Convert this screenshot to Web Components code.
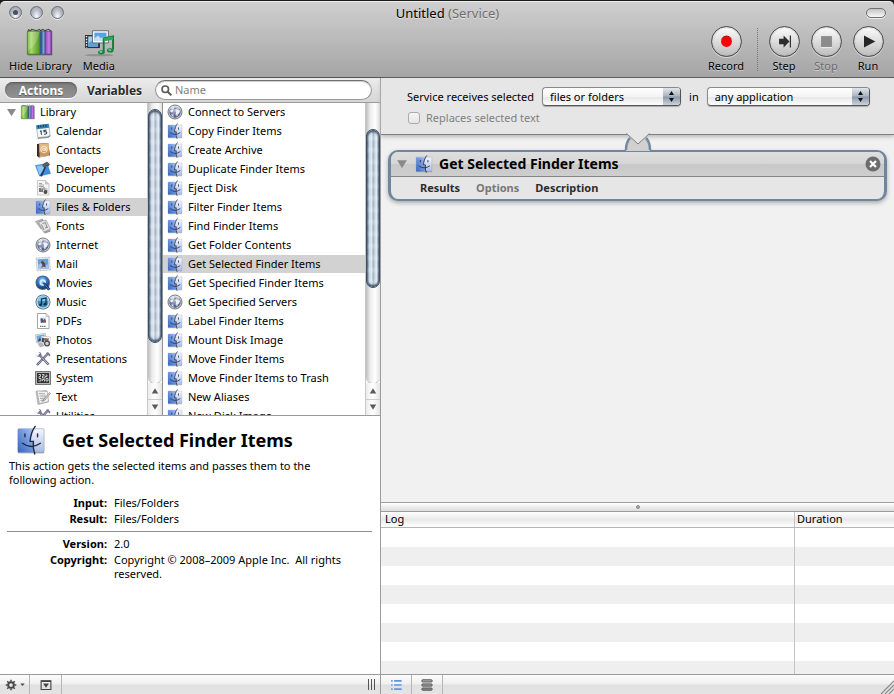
<!DOCTYPE html>
<html lang="en">
<head>
<meta charset="utf-8">
<title>Untitled (Service)</title>
<style>
  html, body { height: 100%; margin: 0; }
  body {
    background: #1c1a1c;
    color: #000;
    font: 11px/14px "Noto Sans", "Open Sans", sans-serif;
    overflow: hidden;
  }
</style>
</head>
<body>
<workflow-window></workflow-window>

<script>
const define = (tag, html, setup) => {
  const template = document.createElement('template');
  template.innerHTML = `<style>
    *, *::before, *::after { box-sizing: border-box; }
    button, input, select { font: inherit; color: inherit; }
    button { appearance: none; background: none; border: 0; margin: 0; padding: 0; text-align: inherit; }
  </style>${html}`;
  customElements.define(tag, class extends HTMLElement {
    constructor() {
      super();
      this.attachShadow({ mode: 'open' }).append(template.content.cloneNode(true));
    }
    connectedCallback() { if (setup) setup(this, this.shadowRoot); }
  });
};

const finder = `<defs><linearGradient id="a" x1="1" y1="0" x2="0" y2="1"><stop offset="0" stop-color="#a9c2ef"/><stop offset=".5" stop-color="#6c93dc"/><stop offset="1" stop-color="#3666bd"/></linearGradient>
  <linearGradient id="b" x1="0" y1="0" x2="0" y2="1"><stop offset="0" stop-color="#f4f7fc"/><stop offset="1" stop-color="#a9bbe4"/></linearGradient></defs>
  <path d="M2 29.500H30" stroke="#333" stroke-opacity=".45" stroke-width="1.500"/>
  <rect x="2" y="4" width="28" height="25" rx="1" fill="url(#b)" stroke="#8c99b3" stroke-width=".6"/>
  <path d="M3 4H19C17 9 15.500 13 15 18H18.500Q18 24 19 29H3Q2 29 2 28V5Q2 4 3 4Z" fill="url(#a)"/>
  <path d="M20.500 1.500C17 6 15.500 12 15 17.500H18.500C18 23 18.500 27 20 31M7 19.500Q16 26.500 26 19.500M9.500 9.500V12.500M23 9.500V12.500" fill="none" stroke="#1f2b45" stroke-width="1.500" stroke-linecap="round"/>`;

const books = `<defs><linearGradient id="g" x2="1"><stop offset="0" stop-color="#66a52d"/><stop offset=".3" stop-color="#a8d868"/><stop offset="1" stop-color="#4c9421"/></linearGradient><linearGradient id="p" x2="1"><stop offset="0" stop-color="#9248bd"/><stop offset=".6" stop-color="#c681e4"/><stop offset="1" stop-color="#6f2d96"/></linearGradient></defs>
  <path d="M3 5L4 3L6 4L7 2.500L13 4L15 2.500L17 4L19 2.500L21 4L25 2.500L28 4.500" fill="#ddd" stroke="#3f463c" stroke-width="1.200"/>
  <path d="M3 29.500H29" stroke="#222" stroke-opacity=".5" stroke-width="1.500"/>
  <path d="M2.500 4.500H16V29H2.500Z" fill="url(#g)" stroke="#3f7420" stroke-width=".8"/><path d="M16 4.500H18.300V29H16Z" fill="#375c8c"/><path d="M18.300 4.500H21.500V29H18.300Z" fill="#6fa6dc" stroke="#2d4c78" stroke-width=".6"/><path d="M21.500 4.500H28.500V29H21.500Z" fill="url(#p)" stroke="#552a70" stroke-width=".7"/>
  <path d="M3 5H15.500Q14 18 3 25Z" fill="#fff" opacity=".22"/>`;

const tools = `<path d="M4 28L25 6" stroke="#565675" stroke-width="4.500"/><path d="M5 27L25 6" stroke="#b8b8d4" stroke-width="2"/><path d="M8 7L27 27" stroke="#565675" stroke-width="4.500"/><path d="M9 8L26 26" stroke="#c9c9df" stroke-width="2"/><path d="M2 7L5 10L9 9L10 5L7 2Q13 2 13 8L11 12Q4 13 2 7ZM22 4L29 11L31 8L26 2Z" fill="#77778f"/>`;

const ICONS = {
  finder, tools,
  books,
  calendar: `<g transform="rotate(-7 16 16)"><path d="M4 4H29V28H4Z" fill="#f4f7f9" stroke="#7b8790"/><path d="M4 3H29V11H4Z" fill="#2d84b8"/><path d="M8 4V8M13 4V8M18 4V8M23 4V8" stroke="#15374e" stroke-width="2"/><path d="M10 16L12 15V23M23 15H18V18Q23 17.500 23 20.500Q22.500 23.500 17.500 22.500" fill="none" stroke="#2a343c" stroke-width="2"/><path d="M4 29L24 30L29 27" fill="none" stroke="#6e757c" stroke-width="2"/></g>`,
  contacts: `<path d="M4 4L26 2L30 27L8 31L4 28Z" fill="#3c2b23"/><path d="M8 3L27 2L29 26L9 29Z" fill="#c99757"/><path d="M9 4L27 3L28 13L9 20Z" fill="#e0b882"/><circle cx="18" cy="15" r="6.500" fill="none" stroke="#fff4e1" stroke-width="1.500"/><circle cx="18" cy="15" r="2.500" fill="none" stroke="#fff4e1" stroke-width="1.500"/><path d="M21 12V17Q24 19 24.500 15" fill="none" stroke="#fff4e1" stroke-width="1.500"/><path d="M9 29.500L29 27" stroke="#e4ded5" stroke-width="1.500"/>`,
  developer: `<path d="M1 9L24 5L31 25L9 30Z" fill="#3d8fe5" stroke="#2764ac"/><path d="M3 10L22 7L17 19L9 28Z" fill="#8cc4f8"/><path d="M10 30L19 12L22 13L14 31Z" fill="#273a56"/><path d="M15 10Q17 4 24 2L29 6L27 10L22 9L21 14Z" fill="#5c6269" stroke="#262c34"/>`,
  documents: `<path d="M5 1H21L28 8V30H5Z" fill="#f5f5f5" stroke="#999"/><path d="M21 1V8H28" fill="#ccc" stroke="#aaa"/><path d="M8 7H14M8 10H18M8 13H18M19 18H25M19 21H25" stroke="#888" stroke-width="1.500"/><path d="M8 16H16V24H8Z" fill="#777"/><path d="M11 13L16 17L12 20Z" fill="#bbb"/><circle cx="21" cy="24" r="4" fill="#594844"/><circle cx="18" cy="17" r="3" fill="#9ca8b5"/>`,
  fonts: `<path d="M1 7L15 2L21 18L12 22Z" fill="#bbb" stroke="#777"/><path d="M7 8L22 4L31 22L17 28Z" fill="#e4e4e4" stroke="#777"/><path d="M15 11L21 9L24 20M13 13L18 24M20 20L26 18" stroke="#8c8c8c" stroke-width="2" fill="none"/><path d="M17 28L30 23L31 27L20 31Z" fill="#999"/>`,
  globe: `<defs><radialGradient id="gl" cx=".5" cy=".35" r=".7"><stop offset="0" stop-color="#b9c2de"/><stop offset=".6" stop-color="#7580a6"/><stop offset="1" stop-color="#3f4664"/></radialGradient></defs><circle cx="16" cy="16" r="14" fill="#d9dbe2" stroke="#5c5f6a" stroke-width="1.700"/><circle cx="16" cy="16" r="11.500" fill="url(#gl)"/><path d="M8 9L13 6L16 8L13 11L12 15L9 17L6 14ZM18 9L24 9L26 15L23 20L20 25L17 21L18 16L15 13ZM8 20L13 21L13 26L10 24Z" fill="#eef0f8"/><path d="M5 12Q16 6 27 12M5 20Q16 26 27 20M16 4V28" fill="none" stroke="#4c567e" stroke-opacity=".7" stroke-width="1"/><path d="M6 9Q9 3.500 16 3.500Q23 3.500 26 9Q16 5 6 9Z" fill="#fff" opacity=".6"/>`,
  mail: `<g transform="rotate(-4 16 16)"><path d="M3 3H30V29H3Z" fill="#e6eaf1" stroke="#8b94a4" stroke-dasharray="2 1"/><path d="M6 6H27V26H6Z" fill="#6d9ddb"/><path d="M6 18L13 13L19 20L27 17V26H6Z" fill="#a5c4e9"/><path d="M15 9L20 15L21 23L16 21L11 24L15 18L12 13Z" fill="#55483a"/></g>`,
  movies: `<defs><radialGradient id="q" cx=".45" cy=".3" r=".7"><stop offset="0" stop-color="#9ed0ff"/><stop offset=".5" stop-color="#2d7edb"/><stop offset="1" stop-color="#123565"/></radialGradient></defs><circle cx="15.500" cy="15.500" r="14.500" fill="#5b6472"/><circle cx="15.500" cy="15.500" r="12.500" fill="url(#q)"/><circle cx="15.500" cy="15" r="6.500" fill="#d7ebff"/><circle cx="15.500" cy="15" r="3" fill="#8dbdf2"/><path d="M15 16L20 15L31 28L26 31Z" fill="#173765"/><path d="M18 17L28 29" stroke="#5b99df" stroke-width="1.500"/>`,
  music: `<circle cx="16" cy="16" r="15" fill="#445d70"/><circle cx="16" cy="16" r="13.500" fill="#c9e0ee"/><circle cx="16" cy="16" r="11" fill="#3d91c7"/><path d="M6 14A10 10 0 0 1 26 14Z" fill="#83c7ed"/><path d="M13 21V10L22 8V20" fill="none" stroke="#132f44" stroke-width="2.500"/><ellipse cx="11" cy="21.500" rx="3" ry="2.500" fill="#132f44"/><ellipse cx="20" cy="20.500" rx="3" ry="2.500" fill="#132f44"/>`,
  pdfs: `<path d="M5 1H22L28 7V31H5Z" fill="#fff" stroke="#888" stroke-width="1.500"/><path d="M22 1V7H28" fill="#ddd" stroke="#999"/><path d="M10 9H22V20H10Z" fill="#cfdbea"/><path d="M11 12L14 10L17 14L20 11L22 19H16L12 20Z" fill="#455c83"/><circle cx="19" cy="16" r="2.500" fill="#a24b38"/><path d="M10 26.500H22" stroke="#777" stroke-width="2.500" stroke-dasharray="3 1"/>`,
  photos: `<g transform="rotate(-9 13 13)"><path d="M2 4H22V20H2Z" fill="#eef3f8" stroke="#8d98a3"/><path d="M4 6H20V18H4Z" fill="#71a8da"/><path d="M4 18L10 11L15 18Z" fill="#374764"/></g><path d="M13 8L31 10L29 25L11 23Z" fill="#fff" stroke="#a0a0a0"/><path d="M14 11L20 13L18 21L13 20Z" fill="#414c69"/><path d="M20 12L28 13L26 20L20 19Z" fill="#9a6551"/><circle cx="24" cy="23" r="6" fill="#44484e"/><circle cx="24" cy="23" r="3.500" fill="#ced5df"/><path d="M5 23L14 21L19 28L10 31Z" fill="#b6b6b6"/>`,
  system: `<path d="M1 3H31V29H1Z" fill="#b6b6b6" stroke="#555" stroke-width="1.500"/><path d="M4 6H28V26H4Z" fill="#343434"/><path d="M7 9H11V13H8V17H12V22H7M14 9H18V12H15V16H20V13H24V10H21M15 22V19H19V23M22 17H26V22H22Z" fill="none" stroke="#e4e4e4" stroke-width="1.600"/>`,
  text: `<path d="M2 5L23 3L27 26L6 31Z" fill="#c4c4c4" stroke="#888"/><path d="M4 4L25 5L27 25L9 29Z" fill="#f2f2f2" stroke="#999"/><path d="M8 9L20 10M9 14L22 14M10 19L21 18M11 23L18 22" stroke="#8a8a8a" stroke-width="1.500"/><path d="M29 7L31 9L20 22L15 25L18 20Z" fill="#ddd" stroke="#555"/>`,
  media: `<ellipse cx="16" cy="30" rx="15" ry="1.200" fill="#555" opacity=".35"/><path d="M1 8.500H17V22.500H1Z" fill="#2c3238"/><path d="M4.500 10H15V21H4.500Z" fill="#a7d0f4"/><path d="M4.500 17L9 14L15 18V21H4.500Z" fill="#5da0dd"/><path d="M2.700 9.500V22" stroke="#f4f4f4" stroke-width="1.500" stroke-dasharray="1.500 1.500"/><path d="M9 4H26V17H9Z" fill="#fff" stroke="#5f656d"/><path d="M11 6H24V15H11Z" fill="#58a3e6"/><path d="M11 12L15 9L18 12L21 10.500L24 11V15H11Z" fill="#c2e1f8"/><path d="M21 27V12L31 10V24" fill="none" stroke="#0e7a38" stroke-width="2"/><path d="M21 13.500L31 11.500" stroke="#2ba757" stroke-width="3.500"/><ellipse cx="18.500" cy="27" rx="3.500" ry="2.300" fill="#16833e"/><ellipse cx="28" cy="25" rx="3.500" ry="2.300" fill="#16833e"/><ellipse cx="18" cy="26.500" rx="1.600" ry=".9" fill="#7edb9b"/><ellipse cx="27.500" cy="24.500" rx="1.600" ry=".9" fill="#7edb9b"/>`,
  record: `<circle cx="16" cy="16" r="6" fill="#f00"/><path d="M10.500 13.500A6 6 0 0 1 21.500 13.500" fill="none" stroke="#b00" stroke-width="1"/>`,
  step: `<path d="M10 13H15V9.500L21.500 16L15 22.500V19H10Z" fill="#2e2e2e"/><path d="M22.500 9.500V22.500" stroke="#2e2e2e" stroke-width="1.300"/>`,
  stop: `<path d="M10 10H22V22H10Z" fill="#8b8b8b"/><path d="M10 22.700H22" stroke="#eee"/>`,
  run: `<path d="M11 9.500L23.500 16L11 22.500Z" fill="#262626"/>`,
  down: `<path d="M3 6H29L16 27Z" fill="#8a8a8a"/>`,
  search: `<circle cx="13" cy="13" r="8" fill="none" stroke="#5a5a5a" stroke-width="4"/><path d="M19 19L28 28" stroke="#5a5a5a" stroke-width="5"/>`,
  close: `<circle cx="16" cy="16" r="15" fill="#6c6c6c"/><path d="M10 10L22 22M22 10L10 22" stroke="#fff" stroke-width="4.500"/>`,
  gear: `<circle cx="16" cy="16" r="7.500" fill="none" stroke="#474747" stroke-width="5"/><path d="M16 2V7M16 25V30M2 16H7M25 16H30M6 6L10 10M22 22L26 26M26 6L22 10M10 22L6 26" stroke="#474747" stroke-width="4"/>`,
  caret: `<path d="M2 9H30L16 25Z" fill="#474747"/>`,
  panel: `<path d="M3 5H29V28H3Z" fill="none" stroke="#444" stroke-width="3"/><path d="M3 6H29" stroke="#444" stroke-width="4"/><path d="M8 12H24L16 23Z" fill="#444"/>`,
  list: `<path d="M3 5H7M3 16H7M3 27H7M11 5H31M11 16H31M11 27H31" stroke="#5c94e6" stroke-width="4.500"/>`,
  flow: `<rect x="2" y="2" width="28" height="6" rx="3" fill="#aaa" stroke="#555" stroke-width="2.500"/><rect x="2" y="13" width="28" height="6" rx="3" fill="#999" stroke="#555" stroke-width="2.500"/><rect x="2" y="24" width="28" height="6" rx="3" fill="#888" stroke="#555" stroke-width="2.500"/>`
};

define('ui-icon', `<style>
  :host { display: block; flex: none; width: 16px; height: 16px; }
  svg { display: block; width: 100%; height: 100%; }
</style><svg viewBox="0 0 32 32" aria-hidden="true"></svg>`,
  (el, root) => { root.querySelector('svg').innerHTML = ICONS[el.getAttribute('name')]; });

/* ---------- title bar and toolbar ---------- */

define('window-light', `<style>
  :host { display: block; }
  button { display: grid; place-items: center; width: 13px; height: 13px; border-radius: 50%; border: 1px solid #6b707b;
    background: radial-gradient(ellipse at 50% 85%, #fafbff, #b5b8c2 55%, #8e929d); box-shadow: 0 1px 0 #eee; }
  :host([active]) button::after { content: ""; width: 5px; height: 5px; border-radius: 50%; background: #4a4f5a; }
</style><button></button>`,
  (el, root) => root.querySelector('button').setAttribute('aria-label', el.getAttribute('label')));

define('title-bar', `<style>
  :host { display: grid; grid-template-columns: 1fr auto 1fr; align-items: center; height: 21px; padding: 0 8px 0 9px; }
  .lights { display: flex; gap: 8px; }
  h1 { margin: 0; font-size: 13px; line-height: 16px; font-weight: 400; text-shadow: 0 1px 0 #e2e2e2; }
  h1 ::slotted(span) { color: #6e6e6e; }
  .oval { justify-self: end; width: 20px; height: 10px; border: 1px solid #707070; border-radius: 5px;
    background: linear-gradient(#c4c4c4, #f8f8f8); box-shadow: 0 1px 0 #eee; }
</style>
<div class="lights"><window-light active label="Close"></window-light><window-light label="Minimize"></window-light><window-light label="Zoom"></window-light></div>
<h1><slot></slot></h1>
<button class="oval" aria-label="Toggle toolbar"></button>`);

define('tool-button', `<style>
  :host { display: block; min-width: 32px; }
  button { display: flex; flex-direction: column; align-items: center; gap: 1px; width: 100%; white-space: nowrap; text-shadow: 0 1px 0 #d0d0d0; }
  .face { display: grid; place-items: center; width: 32px; height: 32px; }
  .face ui-icon { width: 30px; height: 30px; }
  :host([round]) { width: 42px; }
  :host([round]) .face { width: 31px; height: 31px; margin-bottom: 1px; border-radius: 50%; border: 1px solid #4c4c4c;
    background: linear-gradient(#fcfcfc, #e0e0e0 45%, #bdbdbd); box-shadow: 0 1px 0 #d5d5d5, inset 0 0 2px #999; }
  :host([round]) ui-icon { width: 29px; height: 29px; }
  :host([off]) button { color: #6a6a6a; }
</style><button><span class="face"></span><span><slot></slot></span></button>`,
  (el, root) => {
    root.querySelector('.face').innerHTML = `<ui-icon name="${el.getAttribute('icon')}"></ui-icon>`;
    root.querySelector('button').disabled = el.hasAttribute('off');
  });

define('tool-bar', `<style>
  :host { display: flex; justify-content: space-between; padding: 3px 5px 4px 9px; }
  .group { display: flex; gap: 11px; }
  .run { gap: 0; }
  hr { width: 1px; margin: 2px 5px 2px 10px; border: 0; border-left: 1px dotted #777; }
</style>
<div class="group"><tool-button icon="books">Hide Library</tool-button><tool-button icon="media">Media</tool-button></div>
<div class="group run"><tool-button round icon="record">Record</tool-button><hr>
  <tool-button round icon="step">Step</tool-button><tool-button round off icon="stop">Stop</tool-button><tool-button round icon="run">Run</tool-button></div>`);

/* ---------- library ---------- */

define('filter-bar', `<style>
  :host { display: flex; align-items: center; height: 25px; padding: 0 8px 0 5px; background: linear-gradient(#ececec, #d6d6d6); border-bottom: 1px solid #9b9b9b; }
  button { font-size: 12px; line-height: 15px; font-weight: 700; color: #2b2b2b; text-align: center; }
  .on { width: 72px; height: 16px; border-radius: 8px; color: #fff; background: linear-gradient(#7d7d7d, #929292); box-shadow: inset 0 1px 2px #555, 0 1px 0 #fff; text-shadow: 0 1px 1px #555; }
  .off { width: 75px; text-shadow: 0 1px 0 #fff; }
  label { display: flex; flex: 1; align-items: center; gap: 2px; min-width: 0; height: 20px; margin-left: 3px; padding-left: 4px; border: 1px solid #999; border-top-color: #6f6f6f; border-radius: 10px; background: #fff; box-shadow: inset 0 1px 1px #ccc; }
  ui-icon { width: 13px; height: 13px; }
  input { flex: 1; min-width: 0; padding: 0; border: 0; outline: 0; background: none; line-height: 16px; }
  input::placeholder { color: #7f7f7f; opacity: 1; }
</style>
<button class="on" aria-pressed="true">Actions</button><button class="off" aria-pressed="false">Variables</button>
<label><ui-icon name="search"></ui-icon><input type="search" placeholder="Name" aria-label="Name"></label>`);

define('scroll-rail', `<style>
  :host { display: flex; flex-direction: column; flex: none; width: 15px; border-left: 1px solid #c9c9c9; background: #fff; }
  .track { display: flex; flex: 1; flex-direction: column; min-height: 0; border-radius: 0 0 7px 7px; background: linear-gradient(90deg, #bdbdbd, #ececec 30%, #fff 65%, #e2e2e2); box-shadow: 0 1px 1px #aaa; }
  .before { flex: var(--before) 0 0; }
  .thumb { flex: var(--size) 0 0; border-radius: 7px; border: 1px solid #3c4e63;
    background: repeating-linear-gradient(#fff0 0 4px, #fff3 7px 9px, #fff0 12px), linear-gradient(90deg, #60748c, #c5d3e1 18%, #dde7f0 38%, #9fb1c4 52%, #cfdce8 68%, #e3eaf1 82%, #65788e);
    box-shadow: inset 0 2px 2px #45586e, inset 0 -2px 2px #45586e; }
  .after { flex: var(--after) 0 0; }
  button { display: grid; place-items: center; height: 16px; width: 100%; background: linear-gradient(90deg, #ececec, #fff 50%, #e4e4e4); }
  .down { border-top: 1px solid #ccc; }
  ui-icon { width: 8px; height: 8px; filter: brightness(.65); }
  .up ui-icon { transform: rotate(180deg); }
</style>
<div class="track"><div class="before"></div><div class="thumb"></div><div class="after"></div></div>
<button class="up" aria-label="Scroll up"><ui-icon name="down"></ui-icon></button>
<button class="down" aria-label="Scroll down"><ui-icon name="down"></ui-icon></button>`);

define('list-row', `<style>
  :host { display: block; flex: none; }
  button { display: flex; align-items: center; gap: 5px; width: 100%; height: 18px; padding-left: var(--indent, 4px); white-space: nowrap; }
  :host([top]) button { padding-left: 6px; gap: 4px; }
  .tri { display: none; width: 11px; height: 11px; }
  :host([top]) .tri { display: block; margin-right: -1px; }
  :host([selected]) button { background: #d2d2d2; }
</style><button><ui-icon class="tri" name="down"></ui-icon><span class="pic"></span><span><slot></slot></span></button>`,
  (el, root) => { root.querySelector('.pic').innerHTML = `<ui-icon name="${el.getAttribute('icon')}"></ui-icon>`; });

define('source-list', `<style>
  :host { display: flex; min-width: 0; min-height: 0; background: #fff; }
  .rows { display: flex; flex: 1; flex-direction: column; gap: 1px; min-width: 0; overflow: hidden; }
</style><div class="rows"><slot></slot></div><scroll-rail></scroll-rail>`);

const fill = (root, selector, rows, chosen) => {
  root.querySelector(selector).innerHTML = rows.map(([icon, text]) =>
    `<list-row icon="${icon}"${icon === 'books' ? ' top' : ''}${text === chosen ? ' selected' : ''}>${text}</list-row>`).join('');
};

define('library-browser', `<style>
  :host { display: grid; grid-template-columns: 163fr 217fr; grid-template-rows: minmax(0, 1fr); min-height: 0; border-bottom: 1px solid #9b9b9b; }
  .groups { --indent: 35px; --before: 6; --size: 233; --after: 40; border-right: 1px solid #8f8f8f; }
  .actions { --before: 26; --size: 158; --after: 95; }
</style><source-list class="groups"></source-list><source-list class="actions"></source-list>`,
  (el, root) => {
    fill(root, '.groups', [['books', 'Library'], ['calendar', 'Calendar'], ['contacts', 'Contacts'], ['developer', 'Developer'],
      ['documents', 'Documents'], ['finder', 'Files &amp; Folders'], ['fonts', 'Fonts'], ['globe', 'Internet'], ['mail', 'Mail'],
      ['movies', 'Movies'], ['music', 'Music'], ['pdfs', 'PDFs'], ['photos', 'Photos'], ['tools', 'Presentations'],
      ['system', 'System'], ['text', 'Text'], ['tools', 'Utilities']], 'Files &amp; Folders');
    fill(root, '.actions', [['globe', 'Connect to Servers'], ['finder', 'Copy Finder Items'], ['finder', 'Create Archive'],
      ['finder', 'Duplicate Finder Items'], ['finder', 'Eject Disk'], ['finder', 'Filter Finder Items'], ['finder', 'Find Finder Items'],
      ['finder', 'Get Folder Contents'], ['finder', 'Get Selected Finder Items'], ['finder', 'Get Specified Finder Items'],
      ['globe', 'Get Specified Servers'], ['finder', 'Label Finder Items'], ['finder', 'Mount Disk Image'], ['finder', 'Move Finder Items'],
      ['finder', 'Move Finder Items to Trash'], ['finder', 'New Aliases'], ['finder', 'New Disk Image']], 'Get Selected Finder Items');
  });

define('action-info', `<style>
  :host { display: block; padding: 8px 8px 0 7px; background: #fff; overflow: hidden; }
  header { display: flex; align-items: center; gap: 16px; height: 32px; padding-left: 9px; }
  header ui-icon { width: 30px; height: 30px; }
  h2 { margin: 0; font-size: 18px; line-height: 24px; font-weight: 700; }
  p { max-width: 340px; margin: 3px 2px 9px; }
  dl { display: grid; grid-template-columns: 100px 1fr; column-gap: 7px; row-gap: 2px; margin: 0; padding-bottom: 5px; }
  dl + dl { border-top: 1px solid #8f8f8f; padding-top: 5px; }
  dt { font-weight: 700; text-align: right; }
  dd { margin: 0; white-space: pre-wrap; }
</style>
<header><ui-icon name="finder"></ui-icon><h2>Get Selected Finder Items</h2></header>
<p>This action gets the selected items and passes them to the following action.</p>
<dl><dt>Input:</dt><dd>Files/Folders</dd><dt>Result:</dt><dd>Files/Folders</dd></dl>
<dl><dt>Version:</dt><dd>2.0</dd><dt>Copyright:</dt><dd>Copyright © 2008–2009 Apple Inc.  All rights reserved.</dd></dl>`);

/* ---------- workflow ---------- */

define('popup-menu', `<style>
  :host { display: block; position: relative; height: 19px; }
  select { appearance: none; display: block; width: 100%; height: 19px; padding: 0 24px 0 7px; border: 1px solid #777; border-color: #8a8a8a #555 #555 #8a8a8a; border-radius: 4px;
    background: linear-gradient(#fff, #f4f4f4 50%, #e6e6e6 51%, #fdfdfd); box-shadow: 0 1px 1px #aaa; line-height: 16px; }
  .cap { position: absolute; top: 1px; right: 1px; bottom: 1px; width: 17px; border-radius: 0 3px 3px 0; pointer-events: none;
    background: linear-gradient(#e0e6ec, #a9b4c0 48%, #8b99a8 52%, #c8d3dd); }
  svg { display: block; width: 17px; height: 17px; }
</style>
<select></select><span class="cap"><svg viewBox="0 0 17 17" aria-hidden="true"><path d="M8.500 3L11 7H6ZM8.500 14L11 10H6Z" fill="#111"/></svg></span>`,
  (el, root) => {
    const select = root.querySelector('select');
    select.add(new Option(el.getAttribute('value')));
    select.setAttribute('aria-label', el.getAttribute('label'));
  });

define('service-bar', `<style>
  :host { display: flex; flex-direction: column; gap: 5px; position: relative; z-index: 1; height: 57px; padding: 9px 20px 0 26px; background: #e6e6e6; border-bottom: 1px solid #7f7f7f; box-shadow: 0 2px 4px #bbb; }
  .line { display: flex; align-items: center; white-space: nowrap; }
  .what { width: 139px; margin: 0 8px; }
  .app { width: 163px; margin-left: 8px; }
  label { display: flex; align-items: center; gap: 5px; color: #808080; }
  input { appearance: none; width: 12px; height: 12px; margin: 0 1px; border: 1px solid #aaa; border-radius: 3px; background: linear-gradient(#f6f6f6, #e6e6e6); }
  svg { position: absolute; left: 50%; bottom: -17px; width: 28px; height: 18px; margin-left: -14px; }
</style>
<div class="line"><span>Service receives selected</span><popup-menu class="what" value="files or folders" label="Service receives selected"></popup-menu><span>in</span><popup-menu class="app" value="any application" label="in"></popup-menu></div>
<label><input type="checkbox" disabled>Replaces selected text</label>
<svg viewBox="0 0 28 18" aria-hidden="true"><path d="M2 18Q2 8 6 5Q9 2 14 2Q19 2 22 5Q26 8 26 18Z" fill="#d0d0d0"/><path d="M2 17Q2 9 6 5M26 17Q26 9 22 5" fill="none" stroke="#7389a2" stroke-width="2.500"/><path d="M2 0L14 11L26 0Z" fill="#e6e6e6"/><path d="M2.500 .5L14 11L25.500 .5" fill="none" stroke="#7f7f7f"/></svg>`);

define('action-card', `<style>
  :host { display: block; border: 3px solid #7086a0; border-width: 2px 3px; border-radius: 10px; background: #e6e6e6; box-shadow: 0 2px 4px #aaa; overflow: hidden; }
  header { display: flex; align-items: center; height: 25px; padding: 0 3px 0 5px; border-bottom: 1px solid #858585; background: linear-gradient(#dedede, #d6d6d6 50%, #c9c9c9 51%, #cecece); }
  .tri { width: 12px; height: 12px; }
  .pic { width: 18px; height: 18px; margin: 0 6px 0 7px; }
  h2 { flex: 1; margin: 0; font-size: 14px; line-height: 20px; font-weight: 700; }
  .x ui-icon { width: 16px; height: 16px; }
  nav { display: flex; gap: 16px; height: 22px; padding-left: 29px; }
  nav button { font-weight: 700; color: #2c2c2c; }
  nav button:disabled { color: #777; }
</style>
<header><button aria-label="Collapse"><ui-icon class="tri" name="down"></ui-icon></button><ui-icon class="pic" name="finder"></ui-icon><h2><slot></slot></h2><button class="x" aria-label="Remove action"><ui-icon name="close"></ui-icon></button></header>
<nav><button>Results</button><button disabled>Options</button><button>Description</button></nav>`);

define('log-table', `<style>
  :host { display: block; min-height: 0; overflow: hidden; background: #fff; }
  table { width: 100%; border-collapse: separate; border-spacing: 0; table-layout: fixed; }
  .time { width: 100px; }
  th { height: 16px; padding: 0 4px; border-bottom: 1px solid #b5b5b5; background: linear-gradient(#fff, #e9e9e9 50%, #fff); font-weight: 400; line-height: 14px; text-align: left; }
  th + th { padding-left: 2px; }
  td { height: 19px; padding: 0; }
  tbody tr:nth-child(even) { background: #efefef; }
  th + th, td + td { border-left: 1px solid #c4c4c4; }
</style>
<table><colgroup><col><col class="time"></colgroup><thead><tr><th>Log</th><th>Duration</th></tr></thead><tbody></tbody></table>`,
  (el, root) => { root.querySelector('tbody').innerHTML = '<tr><td></td><td></td></tr>'.repeat(8); });

define('split-handle', `<style>
  :host { display: grid; place-items: center; height: 10px; border: solid #9e9e9e; border-width: 1px 0; background: linear-gradient(#fff, #dcdcdc); }
  i { width: 4px; height: 4px; border-radius: 50%; background: #b0b0b0; border: 1px solid #8a8a8a; }
</style><i></i>`);

define('bottom-bar', `<style>
  :host { display: flex; height: 21px; border-top: 1px solid #9b9b9b; border-bottom: 1px solid #6b6b6b; background: linear-gradient(#fcfcfc, #efefef 48%, #e0e0e0 52%, #e4e4e4); }
  button { display: flex; align-items: center; justify-content: center; gap: 3px; width: 31px; border-right: 1px solid #b5b5b5; }
  .first { width: 30px; }
  .wide { width: 32px; }
  ui-icon { width: 12px; height: 12px; }
  .small { width: 5px; height: 5px; }
  .grip { width: 8px; height: 11px; margin: 4px 4px 0 auto; background: repeating-linear-gradient(90deg, #555 0 1px, transparent 1px 3px); }
  .corner { align-self: end; width: 14px; height: 14px; margin-left: auto; }
  .left, .right { display: none; flex: 1; }
  :host([side="left"]) .left, :host([side="right"]) .right { display: flex; }
</style>
<div class="left"><button class="first" aria-label="Actions menu"><ui-icon name="gear"></ui-icon><ui-icon class="small" name="caret"></ui-icon></button><button class="wide" aria-label="Show description"><ui-icon name="panel"></ui-icon></button><span class="grip"></span></div>
<div class="right"><button aria-label="Log view"><ui-icon name="list"></ui-icon></button><button aria-label="Workflow view"><ui-icon name="flow"></ui-icon></button>
<svg class="corner" viewBox="0 0 14 14" aria-hidden="true"><path d="M1 14L14 1M5 14L14 5M9 14L14 9" stroke="#888" stroke-width="1.200"/></svg></div>`);

define('workflow-window', `<style>
  :host { display: flex; flex-direction: column; height: 100vh; padding-top: 1px; }
  .chrome { flex: none; border-radius: 5px 5px 0 0; border-top: 1px solid #ededed; border-bottom: 1px solid #515151; background: linear-gradient(#cfcfcf, #a5a5a5); }
  main { display: grid; flex: 1; min-height: 0; grid-template-columns: 381fr 513fr; background: #f1f1f1; }
  .library, .workflow { display: grid; min-width: 0; min-height: 0; }
  .library { grid-template-rows: auto 312fr 258fr auto; border-right: 1px solid #9b9b9b; }
  .workflow { grid-template-rows: auto 366fr auto 162fr auto; }
  .canvas { min-height: 0; padding: 15px 7px 0 7px; }
</style>
<div class="chrome"><title-bar>Untitled <span>(Service)</span></title-bar><tool-bar></tool-bar></div>
<main>
  <section class="library"><filter-bar></filter-bar><library-browser></library-browser><action-info></action-info><bottom-bar side="left"></bottom-bar></section>
  <section class="workflow"><service-bar></service-bar><div class="canvas"><action-card>Get Selected Finder Items</action-card></div><split-handle></split-handle><log-table></log-table><bottom-bar side="right"></bottom-bar></section>
</main>`);
</script>
</body>
</html>
